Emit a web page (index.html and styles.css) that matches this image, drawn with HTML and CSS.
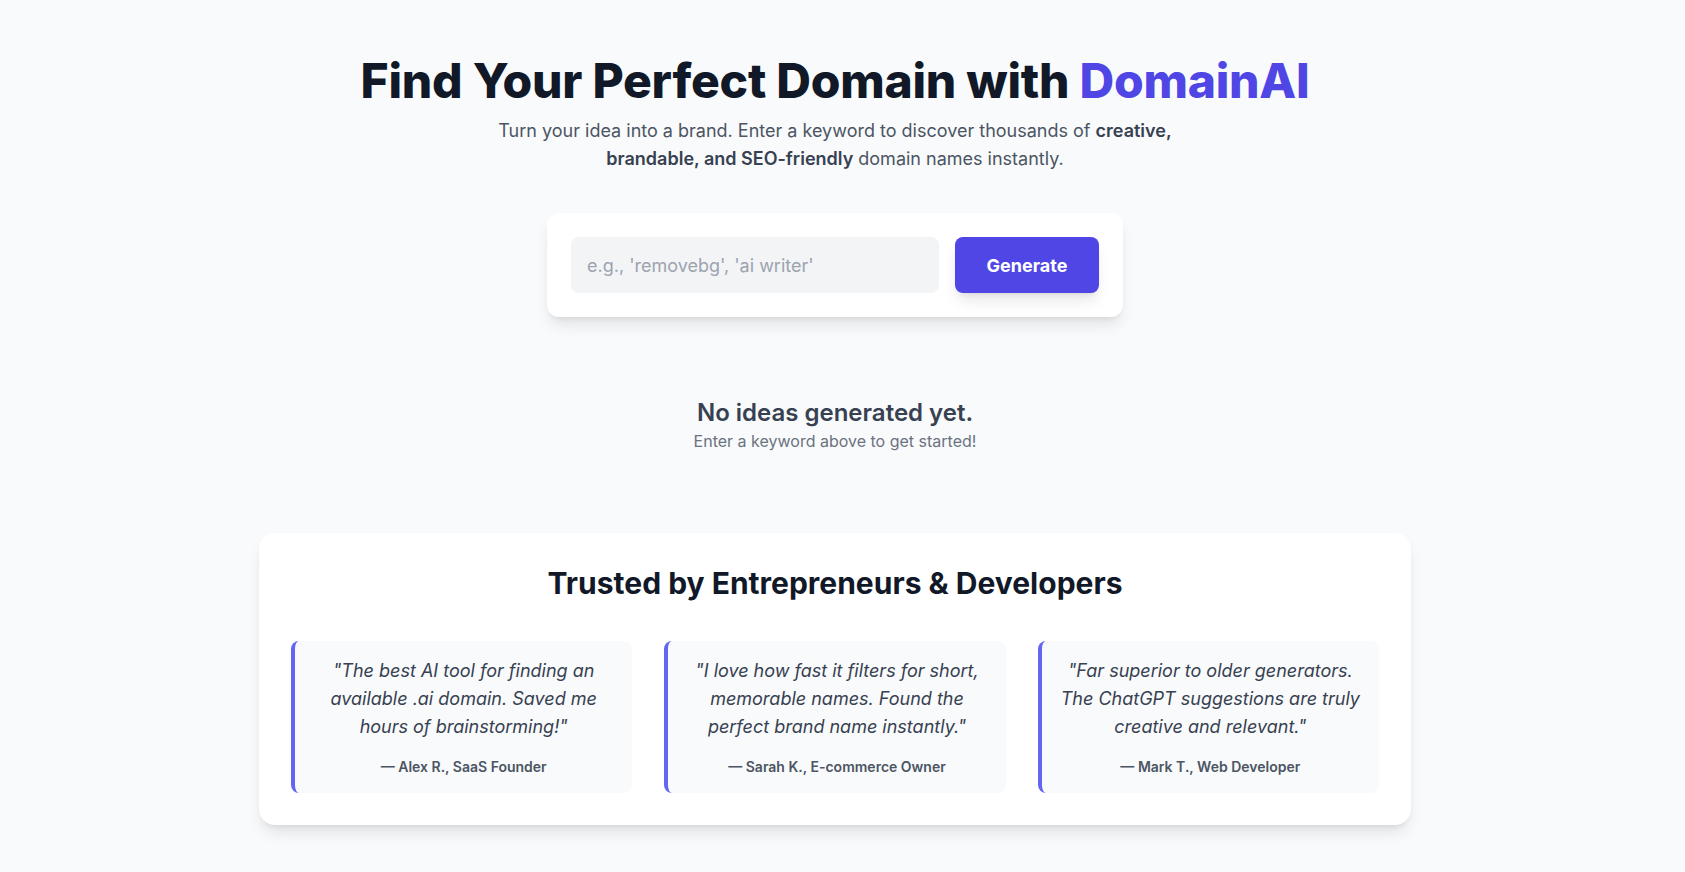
FILE: index.html
```html
<!DOCTYPE html>
<html lang="en">
<head>
    <meta charset="UTF-8">
    <meta name="viewport" content="width=device-width, initial-scale=1.0">
    <title>DomainAI - Find Your Perfect Domain</title>
    <link rel="stylesheet" href="styles.css">
</head>
<body>
    <main class="page">
        <header class="hero">
            <h1>Find Your Perfect Domain with <span class="brand">DomainAI</span></h1>
            <p class="subtitle">Turn your idea into a brand. Enter a keyword to discover thousands of <strong>creative,</strong> <strong>brandable, and SEO-friendly</strong> domain names instantly.</p>
        </header>

        <div class="search-card">
            <input type="text" class="search-input" placeholder="e.g., 'removebg', 'ai writer'">
            <button class="btn-generate">Generate</button>
        </div>

        <div class="results">
            <h3>No ideas generated yet.</h3>
            <p>Enter a keyword above to get started!</p>
        </div>

        <section class="testimonials">
            <h2>Trusted by Entrepreneurs &amp; Developers</h2>
            <div class="testimonial-grid">
                <div class="testimonial">
                    <p class="quote">"The best AI tool for finding an available .ai domain. Saved me hours of brainstorming!"</p>
                    <p class="author">— Alex R., SaaS Founder</p>
                </div>
                <div class="testimonial">
                    <p class="quote">"I love how fast it filters for short, memorable names. Found the perfect brand name instantly."</p>
                    <p class="author">— Sarah K., E-commerce Owner</p>
                </div>
                <div class="testimonial">
                    <p class="quote">"Far superior to older generators. The ChatGPT suggestions are truly creative and relevant."</p>
                    <p class="author">— Mark T., Web Developer</p>
                </div>
            </div>
        </section>
    </main>
</body>
</html>
```

FILE: styles.css
```css
body {
    margin: 0;
    background-color: #f9fafb;
    font-family: Inter, "Noto Sans", Arial, sans-serif;
    color: #111827;
}

.page {
    padding: 57px 31px 48px 16px;
    text-align: center;
}

.hero h1 {
    margin: 0 0 12px;
    font-size: 48px;
    line-height: 48px;
    font-weight: 800;
    letter-spacing: -0.25px;
    color: #111827;
}

.brand {
    color: #4f46e5;
}

.subtitle {
    max-width: 680px;
    margin: 0 auto 40px;
    font-size: 18px;
    line-height: 28px;
    color: #4b5563;
}

.subtitle strong {
    font-weight: 600;
    color: #374151;
}

.search-card {
    display: flex;
    gap: 16px;
    width: 576px;
    box-sizing: border-box;
    margin: 0 auto;
    padding: 24px;
    background-color: #fff;
    border-radius: 12px;
    box-shadow: 0 10px 15px -3px rgba(0, 0, 0, 0.1), 0 4px 6px -4px rgba(0, 0, 0, 0.1);
}

.search-input {
    flex: 1;
    min-width: 0;
    height: 56px;
    padding: 0 16px;
    border: none;
    border-radius: 8px;
    background-color: #f3f4f6;
    font-family: inherit;
    font-size: 18px;
    color: #111827;
    outline: none;
}

.search-input::placeholder {
    color: #9ca3af;
}

.btn-generate {
    width: 144px;
    height: 56px;
    border: none;
    border-radius: 8px;
    background-color: #4f46e5;
    color: #fff;
    font-family: inherit;
    font-size: 18px;
    font-weight: 700;
    cursor: pointer;
    box-shadow: 0 10px 15px -3px rgba(0, 0, 0, 0.1), 0 4px 6px -4px rgba(0, 0, 0, 0.1);
}

.btn-generate:hover {
    background-color: #4338ca;
}

.results {
    margin-top: 80px;
}

.results h3 {
    margin: 0;
    font-size: 24px;
    line-height: 32px;
    font-weight: 600;
    color: #374151;
}

.results p {
    margin: 0;
    font-size: 16px;
    line-height: 24px;
    color: #6b7280;
}

.testimonials {
    width: 1152px;
    box-sizing: border-box;
    margin: 80px auto 0;
    padding: 32px;
    background-color: #fff;
    border-radius: 16px;
    box-shadow: 0 10px 15px -3px rgba(0, 0, 0, 0.1), 0 4px 6px -4px rgba(0, 0, 0, 0.1);
}

.testimonials h2 {
    margin: 0 0 40px;
    font-size: 30px;
    line-height: 36px;
    font-weight: 700;
    color: #111827;
}

.testimonial-grid {
    display: grid;
    grid-template-columns: repeat(3, 1fr);
    gap: 32px;
}

.testimonial {
    padding: 16px 18px;
    background-color: #f9fafb;
    border-left: 4px solid #6366f1;
    border-radius: 8px;
}

.quote {
    margin: 0;
    font-size: 18px;
    line-height: 28px;
    font-style: italic;
    color: #374151;
}

.author {
    margin: 16px 0 0;
    font-size: 14px;
    line-height: 20px;
    font-weight: 600;
    color: #4b5563;
}
```
